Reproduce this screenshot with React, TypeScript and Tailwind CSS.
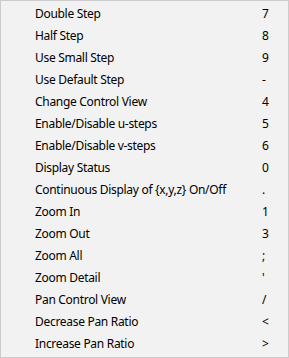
import React from 'react'

const ITEMS: [string, string][] = [
    ['Double Step', '7'],
    ['Half Step', '8'],
    ['Use Small Step', '9'],
    ['Use Default Step', '-'],
    ['Change Control View', '4'],
    ['Enable/Disable u-steps', '5'],
    ['Enable/Disable v-steps', '6'],
    ['Display Status', '0'],
    ['Continuous Display of {x,y,z} On/Off', '.'],
    ['Zoom In', '1'],
    ['Zoom Out', '3'],
    ['Zoom All', ';'],
    ['Zoom Detail', "'"],
    ['Pan Control View', '/'],
    ['Decrease Pan Ratio', '<'],
    ['Increase Pan Ratio', '>'],
]

export default function App() {
    return (
        <div className="w-[289px] h-[358px] bg-[#f2f2f2] border border-[#cccccc] py-[2px] text-[12px] text-black font-['Noto_Sans',sans-serif] leading-none">
            {ITEMS.map(([label, key]) => (
                <div key={label} className="h-[22px] flex items-center">
                    <span className="w-[261px] pl-[34px] whitespace-nowrap tracking-[-0.3px]">{label}</span>
                    <span>{key}</span>
                </div>
            ))}
        </div>
    )
}
